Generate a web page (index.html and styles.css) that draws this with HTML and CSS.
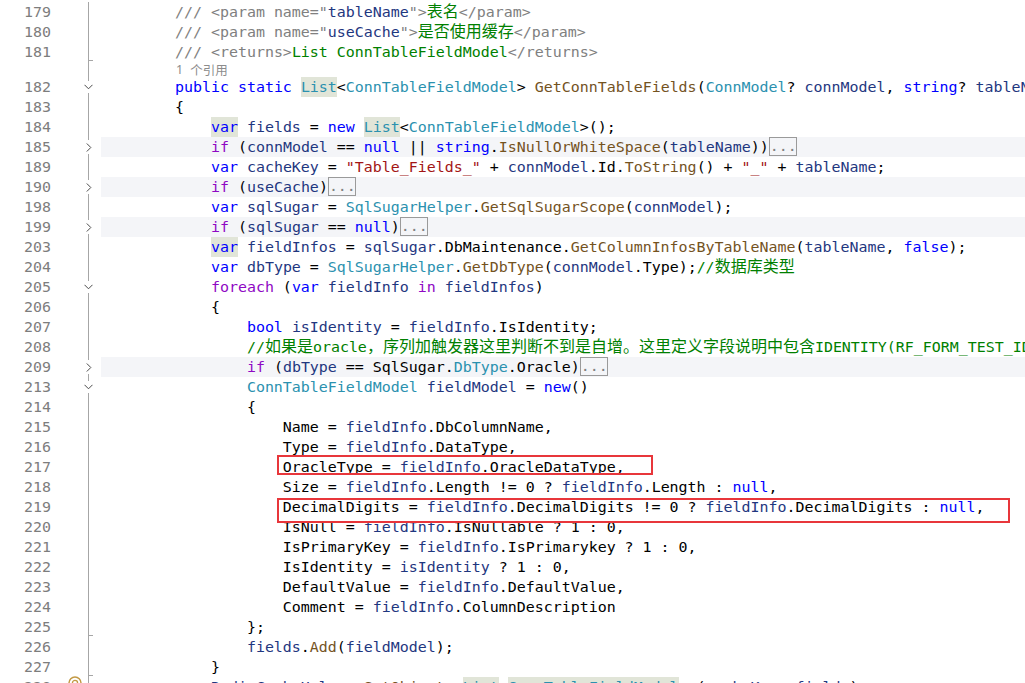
FILE: index.html
```html
<!DOCTYPE html>
<html lang="zh">
<head>
<meta charset="utf-8">
<title>Editor</title>
<link rel="stylesheet" href="styles.css">
</head>
<body>
<div class="editor">
  <div class="row"><span class="ln">179</span><span class="fold"></span><span class="code">        <span class="x">/// &lt;param name="</span><span class="v">tableName</span><span class="x">"&gt;</span><span class="g cj">表名</span><span class="x">&lt;/param&gt;</span></span></div>
  <div class="row"><span class="ln">180</span><span class="fold"></span><span class="code">        <span class="x">/// &lt;param name="</span><span class="v">useCache</span><span class="x">"&gt;</span><span class="g cj">是否使用缓存</span><span class="x">&lt;/param&gt;</span></span></div>
  <div class="row"><span class="ln">181</span><span class="fold tick"></span><span class="code">        <span class="x">/// &lt;returns&gt;</span><span class="g">List ConnTableFieldModel</span><span class="x">&lt;/returns&gt;</span></span></div>
  <div class="row lens"><span class="ln"></span><span class="fold"></span><span class="code"><span class="lens-text"><span class="lens-num">1</span>个引用</span></span></div>
  <div class="row"><span class="ln">182</span><span class="fold"><span class="chev down"><svg width="9" height="6" viewBox="0 0 9 6"><path d="M0.5 0.8 L4.5 4.8 L8.5 0.8" fill="none" stroke="#4a4a4a" stroke-width="1"/></svg></span></span><span class="code">        <span class="k">public static</span> <span class="t hl">List</span>&lt;<span class="t">ConnTableFieldModel</span>&gt; <span class="m">GetConnTableFields</span>(<span class="t">ConnModel</span>? <span class="v">connModel</span>, <span class="k">string</span>? <span class="v">tableName</span>, <span class="k">bool</span> <span class="v">useCache</span> = <span class="k">true</span>)</span></div>
  <div class="row"><span class="ln">183</span><span class="fold"></span><span class="code">        {</span></div>
  <div class="row"><span class="ln">184</span><span class="fold"></span><span class="code">            <span class="k hl">var</span> <span class="v">fields</span> = <span class="k">new</span> <span class="t hl">List</span>&lt;<span class="t">ConnTableFieldModel</span>&gt;();</span></div>
  <div class="row"><span class="ln">185</span><span class="fold"><span class="chev right"><svg width="6" height="9" viewBox="0 0 6 9"><path d="M0.8 0.5 L4.8 4.5 L0.8 8.5" fill="none" stroke="#4a4a4a" stroke-width="1"/></svg></span></span><span class="code band">            <span class="c">if</span> (<span class="v">connModel</span> == <span class="k">null</span> || <span class="k">string</span>.<span class="m">IsNullOrWhiteSpace</span>(<span class="v">tableName</span>))<span class="more">...</span></span></div>
  <div class="row"><span class="ln">189</span><span class="fold"></span><span class="code">            <span class="k">var</span> <span class="v">cacheKey</span> = <span class="s">"Table_Fields_"</span> + <span class="v">connModel</span>.Id.<span class="m">ToString</span>() + <span class="s">"_"</span> + <span class="v">tableName</span>;</span></div>
  <div class="row"><span class="ln">190</span><span class="fold"><span class="chev right"><svg width="6" height="9" viewBox="0 0 6 9"><path d="M0.8 0.5 L4.8 4.5 L0.8 8.5" fill="none" stroke="#4a4a4a" stroke-width="1"/></svg></span></span><span class="code band">            <span class="c">if</span> (<span class="v">useCache</span>)<span class="more">...</span></span></div>
  <div class="row"><span class="ln">198</span><span class="fold"></span><span class="code">            <span class="k">var</span> <span class="v">sqlSugar</span> = <span class="t">SqlSugarHelper</span>.<span class="m">GetSqlSugarScope</span>(<span class="v">connModel</span>);</span></div>
  <div class="row"><span class="ln">199</span><span class="fold"><span class="chev right"><svg width="6" height="9" viewBox="0 0 6 9"><path d="M0.8 0.5 L4.8 4.5 L0.8 8.5" fill="none" stroke="#4a4a4a" stroke-width="1"/></svg></span></span><span class="code band">            <span class="c">if</span> (<span class="v">sqlSugar</span> == <span class="k">null</span>)<span class="more">...</span></span></div>
  <div class="row"><span class="ln">203</span><span class="fold"></span><span class="code">            <span class="k hl">var</span> <span class="v">fieldInfos</span> = <span class="v">sqlSugar</span>.DbMaintenance.<span class="m">GetColumnInfosByTableName</span>(<span class="v">tableName</span>, <span class="k">false</span>);</span></div>
  <div class="row"><span class="ln">204</span><span class="fold"></span><span class="code">            <span class="k">var</span> <span class="v">dbType</span> = <span class="t">SqlSugarHelper</span>.<span class="m">GetDbType</span>(<span class="v">connModel</span>.Type);<span class="g">//<span class="cj">数据库类型</span></span></span></div>
  <div class="row"><span class="ln">205</span><span class="fold"><span class="chev down"><svg width="9" height="6" viewBox="0 0 9 6"><path d="M0.5 0.8 L4.5 4.8 L8.5 0.8" fill="none" stroke="#4a4a4a" stroke-width="1"/></svg></span></span><span class="code">            <span class="c">foreach</span> (<span class="k">var</span> <span class="v">fieldInfo</span> <span class="c">in</span> <span class="v">fieldInfos</span>)</span></div>
  <div class="row"><span class="ln">206</span><span class="fold"></span><span class="code">            {</span></div>
  <div class="row"><span class="ln">207</span><span class="fold"></span><span class="code">                <span class="k">bool</span> <span class="v">isIdentity</span> = <span class="v">fieldInfo</span>.IsIdentity;</span></div>
  <div class="row"><span class="ln">208</span><span class="fold"></span><span class="code">                <span class="g">//<span class="cj">如果是</span>oracle<span class="cj">，序列加触发器这里判断不到是自增。这里定义字段说明中包含</span>IDENTITY(RF_FORM_TEST_ID_SEQ)</span></span></div>
  <div class="row"><span class="ln">209</span><span class="fold"><span class="chev right"><svg width="6" height="9" viewBox="0 0 6 9"><path d="M0.8 0.5 L4.8 4.5 L0.8 8.5" fill="none" stroke="#4a4a4a" stroke-width="1"/></svg></span></span><span class="code band">                <span class="c">if</span> (<span class="v">dbType</span> == SqlSugar.<span class="t">DbType</span>.Oracle)<span class="more">...</span></span></div>
  <div class="row"><span class="ln">213</span><span class="fold"><span class="chev down"><svg width="9" height="6" viewBox="0 0 9 6"><path d="M0.5 0.8 L4.5 4.8 L8.5 0.8" fill="none" stroke="#4a4a4a" stroke-width="1"/></svg></span></span><span class="code">                <span class="t">ConnTableFieldModel</span> <span class="v">fieldModel</span> = <span class="k">new</span>()</span></div>
  <div class="row"><span class="ln">214</span><span class="fold"></span><span class="code">                {</span></div>
  <div class="row"><span class="ln">215</span><span class="fold"></span><span class="code">                    Name = <span class="v">fieldInfo</span>.DbColumnName,</span></div>
  <div class="row"><span class="ln">216</span><span class="fold"></span><span class="code">                    Type = <span class="v">fieldInfo</span>.DataType,</span></div>
  <div class="row"><span class="ln">217</span><span class="fold"></span><span class="code">                    OracleType = <span class="v">fieldInfo</span>.OracleDataType,</span></div>
  <div class="row"><span class="ln">218</span><span class="fold"></span><span class="code">                    Size = <span class="v">fieldInfo</span>.Length != 0 ? <span class="v">fieldInfo</span>.Length : <span class="k">null</span>,</span></div>
  <div class="row"><span class="ln">219</span><span class="fold"></span><span class="code">                    DecimalDigits = <span class="v">fieldInfo</span>.DecimalDigits != 0 ? <span class="v">fieldInfo</span>.DecimalDigits : <span class="k">null</span>,</span></div>
  <div class="row"><span class="ln">220</span><span class="fold"></span><span class="code">                    IsNull = <span class="v">fieldInfo</span>.IsNullable ? 1 : 0,</span></div>
  <div class="row"><span class="ln">221</span><span class="fold"></span><span class="code">                    IsPrimaryKey = <span class="v">fieldInfo</span>.IsPrimarykey ? 1 : 0,</span></div>
  <div class="row"><span class="ln">222</span><span class="fold"></span><span class="code">                    IsIdentity = <span class="v">isIdentity</span> ? 1 : 0,</span></div>
  <div class="row"><span class="ln">223</span><span class="fold"></span><span class="code">                    DefaultValue = <span class="v">fieldInfo</span>.DefaultValue,</span></div>
  <div class="row"><span class="ln">224</span><span class="fold"></span><span class="code">                    Comment = <span class="v">fieldInfo</span>.ColumnDescription</span></div>
  <div class="row"><span class="ln">225</span><span class="fold tick"></span><span class="code">                };</span></div>
  <div class="row"><span class="ln">226</span><span class="fold"></span><span class="code">                <span class="v">fields</span>.<span class="m">Add</span>(<span class="v">fieldModel</span>);</span></div>
  <div class="row"><span class="ln">227</span><span class="fold tick"></span><span class="code">            }</span></div>
  <div class="row"><span class="ln">228</span><span class="fold"><span class="badge"><svg width="14" height="14" viewBox="0 0 14 14"><circle cx="7" cy="7" r="6" fill="none" stroke="#c39a45" stroke-width="1.5"/><circle cx="7" cy="7" r="2.6" fill="none" stroke="#c39a45" stroke-width="1.3"/></svg></span></span><span class="code">            <span class="v">RedisCacheHelper</span>.<span class="m">SetObjects</span>&lt;<span class="t hl">List</span>&lt;<span class="t hl">ConnTableFieldModel</span>&gt;&gt;(<span class="v">cacheKey</span>, <span class="v">fields</span>);</span></div>

  <div class="mark mark-1"></div>
  <div class="mark mark-2"></div>
</div>
</body>
</html>
```
FILE: styles.css
```css
html, body {
  margin: 0;
  padding: 0;
  background: #ffffff;
  width: 1025px;
  height: 683px;
  overflow: hidden;
}

.editor {
  position: relative;
  padding-top: 2px;
  font-family: "DejaVu Sans Mono", "Liberation Mono", monospace;
  font-size: 14.95px;
  color: #000000;
}

.row {
  display: flex;
  height: 20px;
  line-height: 20px;
  white-space: pre;
}

.row.lens {
  height: 15px;
  line-height: 15px;
}

.ln {
  flex: none;
  width: 51px;
  text-align: right;
  color: #7d7d7d;
}

.fold {
  flex: none;
  position: relative;
  width: 50px;
}

.fold::before {
  content: "";
  position: absolute;
  left: 37px;
  top: 0;
  bottom: 0;
  width: 1px;
  background: #a6a6a6;
}

.fold.tick::after {
  content: "";
  position: absolute;
  left: 37px;
  bottom: 1px;
  width: 5px;
  height: 1px;
  background: #a6a6a6;
}

.chev {
  position: absolute;
  display: flex;
  align-items: center;
  justify-content: center;
  background: #ffffff;
}

.chev svg { display: block; }

.chev.down {
  left: 33px;
  top: 4px;
  width: 9px;
  height: 12px;
}

.chev.right {
  left: 35px;
  top: 3px;
  width: 6px;
  height: 14px;
}

.badge {
  position: absolute;
  left: 17px;
  top: -1px;
  width: 14px;
  height: 14px;
}

.badge svg { display: block; }

.code {
  flex: 1;
  padding-left: 2px;
  overflow: hidden;
}

.code.band {
  background: #f4f5f8;
}

.lens-text {
  display: inline-flex;
  align-items: center;
  gap: 7px;
  padding-left: 73px;
  font-family: "Noto Sans CJK SC", "Noto Sans", sans-serif;
  font-size: 12.5px;
  color: #8c8c8c;
}

.lens-num {
  font-family: "Noto Sans", sans-serif;
}

.more {
  display: inline-block;
  box-sizing: border-box;
  height: 19px;
  line-height: 17px;
  vertical-align: top;
  width: 28px;
  border: 1px solid #9a9a9a;
  color: #808080;
  text-align: center;
}

.cj {
  font-family: "Noto Sans CJK SC", sans-serif;
  font-size: 16px;
  line-height: 1;
}

.hl {
  display: inline-block;
  height: 20px;
  vertical-align: top;
  background: #e1e5d8;
}

.k { color: #0000ff; }
.c { color: #8f08c4; }
.t { color: #2b91af; }
.m { color: #74531f; }
.v { color: #1f377f; }
.s { color: #a31515; }
.g { color: #008000; }
.x { color: #808080; }

.mark {
  position: absolute;
  box-sizing: border-box;
  border: 2.5px solid #e8363b;
}

.mark-1 {
  left: 277px;
  top: 455px;
  width: 376px;
  height: 20px;
}

.mark-2 {
  left: 277px;
  top: 498px;
  width: 733px;
  height: 25px;
}
```
